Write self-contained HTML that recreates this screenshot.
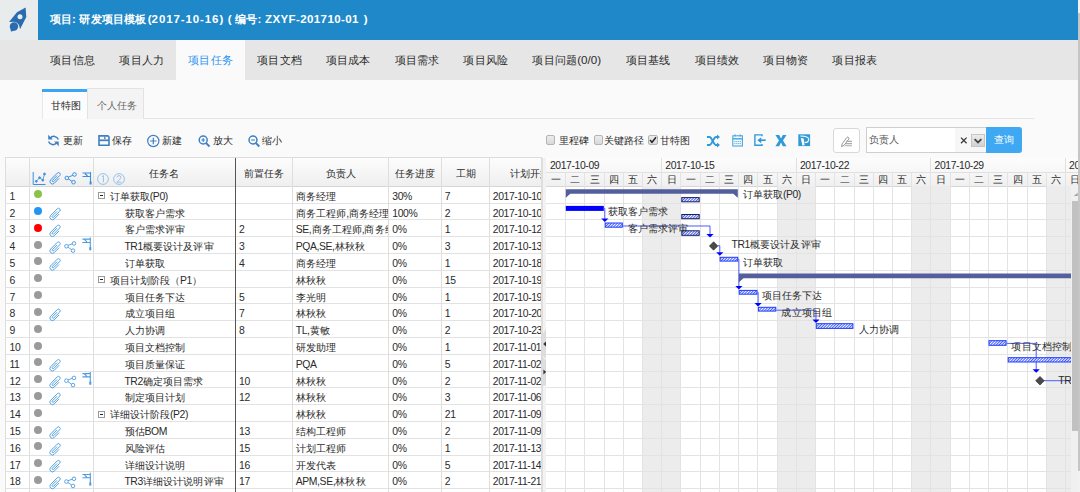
<!DOCTYPE html><html><head><meta charset="utf-8"><style>
@font-face{font-family:"Liberation Sans Wide";src:local("Liberation Sans");size-adjust:130%;ascent-override:69.6%;descent-override:16.3%;line-gap-override:0%}
*{margin:0;padding:0;box-sizing:border-box}
html,body{width:1080px;height:492px;overflow:hidden;background:#fafafa;font-family:"Liberation Sans",sans-serif;color:#333}
.ab{position:absolute}
.t{position:absolute;white-space:nowrap;line-height:1}
i{font-style:normal;display:inline-block;width:1em;text-align:center;font-size:.97em;font-family:"Liberation Sans Wide","Liberation Sans",sans-serif}
</style></head><body>
<div class="ab" style="left:0;top:0;width:38px;height:40px;background:#e9ecec"></div>
<svg class="ab" style="left:0;top:0" width="38" height="40" viewBox="0 0 38 40"><path d="M25.6 7.6 L26.3 17 L20 29.3 Q19.5 22.5 14 21.8 L9 22 L17 12.2 Z" fill="#2a6cb0"/><circle cx="20" cy="16.7" r="2.5" fill="#e9ecec"/><circle cx="14" cy="26.5" r="4.2" fill="#2a6cb0"/><path d="M10 26 L11 31.8 L15 30" fill="#2a6cb0"/></svg>
<div class="ab" style="left:38px;top:0;width:1042px;height:40px;background:#1f88c8"></div>
<div class="t" style="left:49.7px;top:14px;font-size:11.5px;font-weight:bold;color:#fff;letter-spacing:0px"><i>项</i><i>目</i>:</div>
<div class="t" style="left:79.4px;top:14px;font-size:11.5px;font-weight:bold;color:#fff;letter-spacing:0px"><i>研</i><i>发</i><i>项</i><i>目</i><i>模</i><i>板</i></div>
<div class="t" style="left:147.7px;top:14px;font-size:11.5px;font-weight:bold;color:#fff;letter-spacing:0px">(</div>
<div class="t" style="left:151.6px;top:14px;font-size:11.5px;font-weight:bold;color:#fff;letter-spacing:0.9px">2017-10-16</div>
<div class="t" style="left:219.4px;top:14px;font-size:11.5px;font-weight:bold;color:#fff;letter-spacing:0px">)</div>
<div class="t" style="left:227.7px;top:14px;font-size:11.5px;font-weight:bold;color:#fff;letter-spacing:0px">(</div>
<div class="t" style="left:235.2px;top:14px;font-size:11.5px;font-weight:bold;color:#fff;letter-spacing:0px"><i>编</i><i>号</i>:</div>
<div class="t" style="left:265.0px;top:14px;font-size:11.5px;font-weight:bold;color:#fff;letter-spacing:0.4px">ZXYF-201710-01</div>
<div class="t" style="left:363.8px;top:14px;font-size:11.5px;font-weight:bold;color:#fff;letter-spacing:0px">)</div>
<div class="ab" style="left:0;top:40px;width:1080px;height:40px;background:#e6e6e6"></div>
<div class="ab" style="left:176px;top:40px;width:69px;height:40px;background:#fafafa"></div>
<div class="t" style="left:50.0px;top:53.6px;font-size:11.6px;color:#2a2a2a"><i>项</i><i>目</i><i>信</i><i>息</i></div>
<div class="t" style="left:119.2px;top:53.6px;font-size:11.6px;color:#2a2a2a"><i>项</i><i>目</i><i>人</i><i>力</i></div>
<div class="t" style="left:187.9px;top:53.6px;font-size:11.6px;color:#2b93f2"><i>项</i><i>目</i><i>任</i><i>务</i></div>
<div class="t" style="left:256.9px;top:53.6px;font-size:11.6px;color:#2a2a2a"><i>项</i><i>目</i><i>文</i><i>档</i></div>
<div class="t" style="left:325.4px;top:53.6px;font-size:11.6px;color:#2a2a2a"><i>项</i><i>目</i><i>成</i><i>本</i></div>
<div class="t" style="left:394.4px;top:53.6px;font-size:11.6px;color:#2a2a2a"><i>项</i><i>目</i><i>需</i><i>求</i></div>
<div class="t" style="left:463.2px;top:53.6px;font-size:11.6px;color:#2a2a2a"><i>项</i><i>目</i><i>风</i><i>险</i></div>
<div class="t" style="left:532.2px;top:53.6px;font-size:11.6px;color:#2a2a2a"><i>项</i><i>目</i><i>问</i><i>题</i>(0/0)</div>
<div class="t" style="left:625.4px;top:53.6px;font-size:11.6px;color:#2a2a2a"><i>项</i><i>目</i><i>基</i><i>线</i></div>
<div class="t" style="left:694.4px;top:53.6px;font-size:11.6px;color:#2a2a2a"><i>项</i><i>目</i><i>绩</i><i>效</i></div>
<div class="t" style="left:763.2px;top:53.6px;font-size:11.6px;color:#2a2a2a"><i>项</i><i>目</i><i>物</i><i>资</i></div>
<div class="t" style="left:832.2px;top:53.6px;font-size:11.6px;color:#2a2a2a"><i>项</i><i>目</i><i>报</i><i>表</i></div>
<div class="ab" style="left:42px;top:118px;width:992px;height:1px;background:#e5e5e5"></div>
<div class="ab" style="left:42px;top:89px;width:45px;height:30px;background:#fcfcfc;border-left:1px solid #e8e8e8"></div>
<div class="ab" style="left:42px;top:89px;width:45px;height:3px;background:#3aa6f2"></div>
<div class="ab" style="left:87px;top:88px;width:57px;height:31px;background:#f4f4f4;border:1px solid #e3e3e3;border-bottom:none"></div>
<div class="t" style="left:50.6px;top:101.3px;font-size:10.4px;letter-spacing:-0.4px;color:#222"><i>甘</i><i>特</i><i>图</i></div>
<div class="t" style="left:96.5px;top:101.3px;font-size:10.4px;letter-spacing:-0.4px;color:#666"><i>个</i><i>人</i><i>任</i><i>务</i></div>
<svg class="ab" style="left:0;top:128px" width="300" height="24" viewBox="0 128 300 24">
<g fill="none" stroke="#3f7fc5" stroke-width="1.6">
<path d="M50.2 138.3 A4.6 4.6 0 0 1 58.3 139.5" stroke-width="1.5"/><path d="M48.6 141.6 A4.6 4.6 0 0 0 56.6 142.8" stroke-width="1.5"/>
<path d="M99 135.9 H107.9 L109 137 V145.2 H99 Z" stroke-width="1.6"/><path d="M99 140.3 H109" stroke-width="1.7"/><path d="M104.8 136.8 V139" stroke-width="1.3"/>
<circle cx="153.3" cy="141" r="5.6" stroke-width="1.2"/><path d="M150 141 H156.6 M153.3 137.7 V144.3" stroke-width="1.2"/>
<circle cx="203.2" cy="140" r="4" stroke-width="1.5"/><path d="M206 143 L209.5 146.5" stroke-width="1.8"/><path d="M201.3 140 H205 M203.2 138.1 V141.9" stroke-width="1.1"/>
<circle cx="253" cy="140" r="4" stroke-width="1.5"/><path d="M255.8 143 L259.3 146.5" stroke-width="1.8"/><path d="M251.1 140 H254.9" stroke-width="1.1"/>
</g>
<path d="M48.2 134.8 V139.6 H52.8 Z M58.7 146.3 V141.6 H54.2 Z" fill="#3f7fc5"/>
</svg>
<div class="t" style="left:62.5px;top:135.8px;font-size:10.4px;letter-spacing:-0.4px;color:#2a2a2a"><i>更</i><i>新</i></div>
<div class="t" style="left:112px;top:135.8px;font-size:10.4px;letter-spacing:-0.4px;color:#2a2a2a"><i>保</i><i>存</i></div>
<div class="t" style="left:162px;top:135.8px;font-size:10.4px;letter-spacing:-0.4px;color:#2a2a2a"><i>新</i><i>建</i></div>
<div class="t" style="left:212.5px;top:135.8px;font-size:10.4px;letter-spacing:-0.4px;color:#2a2a2a"><i>放</i><i>大</i></div>
<div class="t" style="left:262px;top:135.8px;font-size:10.4px;letter-spacing:-0.4px;color:#2a2a2a"><i>缩</i><i>小</i></div>
<div class="ab" style="left:545.7px;top:135.4px;width:9.3px;height:9.3px;border:1px solid #b4b4b4;border-radius:2px;background:linear-gradient(#ececec,#d9d9d9)"></div>
<div class="ab" style="left:594px;top:135.4px;width:9.3px;height:9.3px;border:1px solid #b4b4b4;border-radius:2px;background:linear-gradient(#ececec,#d9d9d9)"></div>
<div class="ab" style="left:648.4px;top:135.4px;width:9.3px;height:9.3px;border:1px solid #b4b4b4;border-radius:2px;background:linear-gradient(#ececec,#d9d9d9)"></div>
<svg class="ab" style="left:648.4px;top:135.4px" width="10" height="10"><path d="M2 5 L4 7.3 L8 2.2" fill="none" stroke="#222" stroke-width="1.4"/></svg>
<div class="t" style="left:558.7px;top:135.8px;font-size:10.4px;letter-spacing:-0.4px;color:#2a2a2a"><i>里</i><i>程</i><i>碑</i></div>
<div class="t" style="left:603.8px;top:135.8px;font-size:10.4px;letter-spacing:-0.4px;color:#2a2a2a"><i>关</i><i>键</i><i>路</i><i>径</i></div>
<div class="t" style="left:659.3px;top:135.8px;font-size:10.4px;letter-spacing:-0.4px;color:#2a2a2a"><i>甘</i><i>特</i><i>图</i></div>
<svg class="ab" style="left:700px;top:130px" width="120" height="20" viewBox="700 130 120 20">
<g fill="none" stroke="#2f9ad8" stroke-width="1.8">
<path d="M707 137 H709.5 C712 137 713.5 145 716 145 H718"/><path d="M707 145 H709.5 C712 145 713.5 137 716 137 H718"/>
</g>
<path d="M717 134.5 L720 137 L717 139.5 Z M717 142.5 L720 145 L717 147.5 Z" fill="#2f9ad8"/>
<g fill="none" stroke="#2f9ad8" stroke-width="1.1">
<g stroke="#4aa8e0"><rect x="732.8" y="135.8" width="9.6" height="10.2"/><path d="M732.8 138.8 H742.4" stroke-width="1.5"/><path d="M735 134.6 V136.6 M740.2 134.6 V136.6" stroke-width="1.3"/></g>
<path d="M734.3 141.6 H741 M734.3 143.6 H741" stroke="#6ab8e8" stroke-width="1" stroke-dasharray="1.3 0.5"/>
</g>
<g fill="none" stroke="#2f9ad8" stroke-width="1.6">
<path d="M762 136.2 V134.9 H754.9 V145.2 H762 V143.9" stroke-width="1.4"/><path d="M765.7 140.2 H760" stroke-width="1.7"/>
</g>
<path d="M757.3 140.2 L761.2 137.2 V143.2 Z" fill="#2f9ad8"/>
<path d="M775.4 135 H779.2 L781 138.6 L782.8 135 H786.5 L783 140.6 L786.5 146.3 H782.8 L781 142.6 L779.2 146.3 H775.4 L779 140.6 Z" fill="#2f9ad8"/>
<rect x="798.3" y="134.3" width="11.8" height="11.8" fill="#2f9ad8"/>
<path d="M800.3 136 Q808.6 136.2 808.7 139.2 Q808.7 142.6 804.6 142.4" fill="none" stroke="#fff" stroke-width="1.2"/><path d="M800.8 138 L803.6 138.4 L804.6 145.3 L802.3 145.5 Z" fill="#fff"/>
</svg>
<div class="ab" style="left:833.2px;top:128.2px;width:27.2px;height:25.3px;border:1px solid #d8d8d8;border-radius:3px;background:#fff"></div>
<svg class="ab" style="left:833px;top:128px" width="28" height="26"><path d="M8.6 18.6 L9.2 15.8 L13.9 9.4 A1.3 1.3 0 0 1 15.9 10.9 L11.2 17.2 Z" fill="none" stroke="#8a8a8a" stroke-width="0.9"/><path d="M13.3 13.4 H19 M12.6 15.6 H19 M11.9 17.8 H19" stroke="#aaa" stroke-width="1.1"/></svg>
<div class="ab" style="left:866.2px;top:127px;width:120px;height:25.8px;border:1px solid #cfcfcf;background:#fff"></div>
<div class="ab" style="left:955px;top:128px;width:30.5px;height:23.8px;background:#f7f7f7"></div>
<div class="t" style="left:868.5px;top:134.5px;font-size:10.4px;letter-spacing:-0.4px;color:#555"><i>负</i><i>责</i><i>人</i></div>
<svg class="ab" style="left:955px;top:130px" width="30" height="20"><path d="M6 7.6 L11.6 13.2 M11.6 7.6 L6 13.2" stroke="#3a3a3a" stroke-width="1.3"/></svg>
<div class="ab" style="left:971.2px;top:133.7px;width:13.5px;height:13.2px;border:1px solid #c4c4cc;background:linear-gradient(#ececec,#d2d2d2)"></div>
<svg class="ab" style="left:971px;top:134px" width="14" height="13"><path d="M3.6 5.2 L7 8.4 L10.4 5.2" fill="none" stroke="#444" stroke-width="1.8"/></svg>
<div class="ab" style="left:986px;top:127px;width:35.7px;height:25.8px;background:#3ea8f2;border-radius:0 3px 3px 0"></div>
<div class="t" style="left:994px;top:134.5px;font-size:10.4px;letter-spacing:-0.4px;color:#fff"><i>查</i><i>询</i></div>
<div class="ab" style="left:5px;top:157.8px;width:536.6px;height:28.4px;background:linear-gradient(#fdfdfd,#efefef)"></div>
<div class="ab" style="left:5px;top:186.2px;width:536.6px;height:305.8px;background:#fff"></div>
<div class="ab" style="left:5px;top:157.3px;width:536.6px;height:1px;background:#dcdcdc"></div>
<div class="ab" style="left:5px;top:185.7px;width:536.6px;height:1px;background:#d6d6d6"></div>
<div class="ab" style="left:5px;top:202.51px;width:536.6px;height:1px;background:#e2e2e2"></div>
<div class="ab" style="left:5px;top:219.32px;width:536.6px;height:1px;background:#e2e2e2"></div>
<div class="ab" style="left:5px;top:236.13px;width:536.6px;height:1px;background:#e2e2e2"></div>
<div class="ab" style="left:5px;top:252.94px;width:536.6px;height:1px;background:#e2e2e2"></div>
<div class="ab" style="left:5px;top:269.75px;width:536.6px;height:1px;background:#e2e2e2"></div>
<div class="ab" style="left:5px;top:286.56px;width:536.6px;height:1px;background:#e2e2e2"></div>
<div class="ab" style="left:5px;top:303.37px;width:536.6px;height:1px;background:#e2e2e2"></div>
<div class="ab" style="left:5px;top:320.18px;width:536.6px;height:1px;background:#e2e2e2"></div>
<div class="ab" style="left:5px;top:336.99px;width:536.6px;height:1px;background:#e2e2e2"></div>
<div class="ab" style="left:5px;top:353.8px;width:536.6px;height:1px;background:#e2e2e2"></div>
<div class="ab" style="left:5px;top:370.61px;width:536.6px;height:1px;background:#e2e2e2"></div>
<div class="ab" style="left:5px;top:387.42px;width:536.6px;height:1px;background:#e2e2e2"></div>
<div class="ab" style="left:5px;top:404.23px;width:536.6px;height:1px;background:#e2e2e2"></div>
<div class="ab" style="left:5px;top:421.04px;width:536.6px;height:1px;background:#e2e2e2"></div>
<div class="ab" style="left:5px;top:437.85px;width:536.6px;height:1px;background:#e2e2e2"></div>
<div class="ab" style="left:5px;top:454.66px;width:536.6px;height:1px;background:#e2e2e2"></div>
<div class="ab" style="left:5px;top:471.47px;width:536.6px;height:1px;background:#e2e2e2"></div>
<div class="ab" style="left:5px;top:488.28px;width:536.6px;height:1px;background:#e2e2e2"></div>
<div class="ab" style="left:4.5px;top:157.8px;width:1px;height:334.2px;background:#dedede"></div>
<div class="ab" style="left:29.0px;top:157.8px;width:1px;height:334.2px;background:#dedede"></div>
<div class="ab" style="left:93.0px;top:157.8px;width:1px;height:334.2px;background:#dedede"></div>
<div class="ab" style="left:235.0px;top:157.8px;width:1px;height:334.2px;background:#555"></div>
<div class="ab" style="left:292.0px;top:157.8px;width:1px;height:334.2px;background:#dedede"></div>
<div class="ab" style="left:388.2px;top:157.8px;width:1px;height:334.2px;background:#dedede"></div>
<div class="ab" style="left:440.9px;top:157.8px;width:1px;height:334.2px;background:#dedede"></div>
<div class="ab" style="left:488.9px;top:157.8px;width:1px;height:334.2px;background:#dedede"></div>
<div class="ab" style="left:541.1px;top:157.8px;width:1px;height:334.2px;background:#dedede"></div>
<div class="t" style="left:134px;width:60px;text-align:center;top:168.5px;font-size:10.4px;letter-spacing:-0.4px;color:#2a2a2a"><i>任</i><i>务</i><i>名</i></div>
<div class="t" style="left:235.5px;width:57.0px;text-align:center;top:168.5px;font-size:10.4px;letter-spacing:-0.4px;color:#2a2a2a"><i>前</i><i>置</i><i>任</i><i>务</i></div>
<div class="t" style="left:292.5px;width:96.2px;text-align:center;top:168.5px;font-size:10.4px;letter-spacing:-0.4px;color:#2a2a2a"><i>负</i><i>责</i><i>人</i></div>
<div class="t" style="left:388.7px;width:52.7px;text-align:center;top:168.5px;font-size:10.4px;letter-spacing:-0.4px;color:#2a2a2a"><i>任</i><i>务</i><i>进</i><i>度</i></div>
<div class="t" style="left:441.4px;width:48.0px;text-align:center;top:168.5px;font-size:10.4px;letter-spacing:-0.4px;color:#2a2a2a"><i>工</i><i>期</i></div>
<div style="position:absolute;left:489.4px;top:157.8px;width:52px;height:28px;overflow:hidden"><div class="t" style="left:0;width:81px;text-align:center;top:11.6px;font-size:10.4px;letter-spacing:-0.4px;color:#2a2a2a"><i>计</i><i>划</i><i>开</i><i>始</i></div></div>
<svg class="ab" style="left:0;top:160px" width="130" height="30" viewBox="0 160 130 30">
<g fill="none" stroke="#3b8fe0" stroke-width="1">
<path d="M33.2 172 V184.5 H45.5"/><path d="M36.3 181.3 L39.6 177.7 L42.8 180.2 L44.5 174" stroke-width="0.8"/>
<circle cx="36.3" cy="181.3" r="0.9" fill="#3b8fe0"/><circle cx="39.6" cy="177.7" r="0.9" fill="#3b8fe0"/><circle cx="42.8" cy="180.2" r="0.9" fill="#3b8fe0"/><circle cx="44.5" cy="174" r="0.9" fill="#3b8fe0"/>
<g transform="translate(55.5 178.5) rotate(45) scale(0.9) translate(-2.8 -8.5)"><path d="M1.8 5 V12.2 A1 1 0 0 0 3.8 12.2 V2.8 A1.9 1.9 0 0 0 0 2.8 V13.2 A2.8 2.8 0 0 0 5.6 13.2 V5.5" stroke-width="1"/></g>
<circle cx="74.5" cy="174.5" r="1.8"/><circle cx="66.8" cy="178" r="1.8"/><circle cx="73.5" cy="182.2" r="1.8"/><path d="M68.4 177.1 L72.9 175.3 M68.4 179 L71.9 181.2"/>
<path d="M90.5 172 V184" stroke-width="1.1"/><path d="M82.5 173 H90.5 M82.5 176.5 H90.5 M85 173.5 L87.5 176" stroke-width="1.1"/>
<circle cx="103" cy="179" r="5.4" stroke="#7db6ea" stroke-width="0.8"/><circle cx="119" cy="179" r="5.4" stroke="#7db6ea" stroke-width="0.8"/>
<path d="M101.9 176.6 L103.4 175.7 V182.3" stroke="#7db6ea" stroke-width="0.8"/><path d="M116.9 177.3 Q117.1 175.6 119 175.6 Q121 175.7 120.9 177.4 Q120.6 179 116.9 182.2 H121.3" stroke="#7db6ea" stroke-width="0.8"/>
</g>
<rect x="89.6" y="181.5" width="2" height="3" fill="#3b8fe0"/>
</svg>
<div class="t" style="left:9.5px;top:191.7px;font-size:10.4px;letter-spacing:-0.4px;color:#2a2a2a">1</div>
<div class="ab" style="left:33.55px;top:190.2px;width:8px;height:8px;border-radius:50%;background:#8bc34a"></div>
<div class="ab" style="left:97.8px;top:192px;width:7.2px;height:7.2px;border:1px solid #9a9a9a;background:#fff"></div>
<div class="ab" style="left:99.6px;top:195.1px;width:3.6px;height:1.2px;background:#222"></div>
<div class="t" style="left:109.5px;top:191.7px;font-size:10.4px;letter-spacing:-0.4px;color:#2a2a2a"><i>订</i><i>单</i><i>获</i><i>取</i>(P0)</div>
<div class="t" style="left:239px;top:191.7px;font-size:10.4px;letter-spacing:-0.4px;color:#2a2a2a"></div>
<div style="position:absolute;left:293px;top:186.2px;width:95px;height:16.81px;overflow:hidden"><div class="t" style="left:2.8px;top:5.5px;font-size:10.4px;letter-spacing:-0.4px;color:#2a2a2a"><i>商</i><i>务</i><i>经</i><i>理</i></div></div>
<div class="t" style="left:392.3px;top:191.7px;font-size:10.4px;letter-spacing:-0.4px;color:#2a2a2a">30%</div>
<div class="t" style="left:444.8px;top:191.7px;font-size:10.4px;letter-spacing:-0.4px;color:#2a2a2a">7</div>
<div style="position:absolute;left:490px;top:186.2px;width:51px;height:16.81px;overflow:hidden"><div class="t" style="left:2.8px;top:5.5px;font-size:10.4px;letter-spacing:-0.4px;color:#2a2a2a">2017-10-10</div></div>
<div class="t" style="left:9.5px;top:208.51px;font-size:10.4px;letter-spacing:-0.4px;color:#2a2a2a">2</div>
<div class="ab" style="left:33.55px;top:207.01px;width:8px;height:8px;border-radius:50%;background:#2196f3"></div>
<div class="t" style="left:124.4px;top:208.51px;font-size:10.4px;letter-spacing:-0.4px;color:#2a2a2a"><i>获</i><i>取</i><i>客</i><i>户</i><i>需</i><i>求</i></div>
<div class="t" style="left:239px;top:208.51px;font-size:10.4px;letter-spacing:-0.4px;color:#2a2a2a"></div>
<div style="position:absolute;left:293px;top:203.01px;width:95px;height:16.81px;overflow:hidden"><div class="t" style="left:2.8px;top:5.5px;font-size:10.4px;letter-spacing:-0.4px;color:#2a2a2a"><i>商</i><i>务</i><i>工</i><i>程</i><i>师</i>,<i>商</i><i>务</i><i>经</i><i>理</i></div></div>
<div class="t" style="left:392.3px;top:208.51px;font-size:10.4px;letter-spacing:-0.4px;color:#2a2a2a">100%</div>
<div class="t" style="left:444.8px;top:208.51px;font-size:10.4px;letter-spacing:-0.4px;color:#2a2a2a">2</div>
<div style="position:absolute;left:490px;top:203.01px;width:51px;height:16.81px;overflow:hidden"><div class="t" style="left:2.8px;top:5.5px;font-size:10.4px;letter-spacing:-0.4px;color:#2a2a2a">2017-10-10</div></div>
<div class="t" style="left:9.5px;top:225.32px;font-size:10.4px;letter-spacing:-0.4px;color:#2a2a2a">3</div>
<div class="ab" style="left:33.55px;top:223.82px;width:8px;height:8px;border-radius:50%;background:#ff0000"></div>
<div class="t" style="left:124.4px;top:225.32px;font-size:10.4px;letter-spacing:-0.4px;color:#2a2a2a"><i>客</i><i>户</i><i>需</i><i>求</i><i>评</i><i>审</i></div>
<div class="t" style="left:239px;top:225.32px;font-size:10.4px;letter-spacing:-0.4px;color:#2a2a2a">2</div>
<div style="position:absolute;left:293px;top:219.82px;width:95px;height:16.81px;overflow:hidden"><div class="t" style="left:2.8px;top:5.5px;font-size:10.4px;letter-spacing:-0.4px;color:#2a2a2a">SE,<i>商</i><i>务</i><i>工</i><i>程</i><i>师</i>,<i>商</i><i>务</i><i>经</i><i>理</i></div></div>
<div class="t" style="left:392.3px;top:225.32px;font-size:10.4px;letter-spacing:-0.4px;color:#2a2a2a">0%</div>
<div class="t" style="left:444.8px;top:225.32px;font-size:10.4px;letter-spacing:-0.4px;color:#2a2a2a">1</div>
<div style="position:absolute;left:490px;top:219.82px;width:51px;height:16.81px;overflow:hidden"><div class="t" style="left:2.8px;top:5.5px;font-size:10.4px;letter-spacing:-0.4px;color:#2a2a2a">2017-10-12</div></div>
<div class="t" style="left:9.5px;top:242.13px;font-size:10.4px;letter-spacing:-0.4px;color:#2a2a2a">4</div>
<div class="ab" style="left:33.55px;top:240.63px;width:8px;height:8px;border-radius:50%;background:#9a9a9a"></div>
<div class="t" style="left:124.4px;top:242.13px;font-size:10.4px;letter-spacing:-0.4px;color:#2a2a2a">TR1<i>概</i><i>要</i><i>设</i><i>计</i><i>及</i><i>评</i><i>审</i></div>
<div class="t" style="left:239px;top:242.13px;font-size:10.4px;letter-spacing:-0.4px;color:#2a2a2a">3</div>
<div style="position:absolute;left:293px;top:236.63px;width:95px;height:16.81px;overflow:hidden"><div class="t" style="left:2.8px;top:5.5px;font-size:10.4px;letter-spacing:-0.4px;color:#2a2a2a">PQA,SE,<i>林</i><i>秋</i><i>秋</i></div></div>
<div class="t" style="left:392.3px;top:242.13px;font-size:10.4px;letter-spacing:-0.4px;color:#2a2a2a">0%</div>
<div class="t" style="left:444.8px;top:242.13px;font-size:10.4px;letter-spacing:-0.4px;color:#2a2a2a">3</div>
<div style="position:absolute;left:490px;top:236.63px;width:51px;height:16.81px;overflow:hidden"><div class="t" style="left:2.8px;top:5.5px;font-size:10.4px;letter-spacing:-0.4px;color:#2a2a2a">2017-10-13</div></div>
<div class="t" style="left:9.5px;top:258.94px;font-size:10.4px;letter-spacing:-0.4px;color:#2a2a2a">5</div>
<div class="ab" style="left:33.55px;top:257.44px;width:8px;height:8px;border-radius:50%;background:#9a9a9a"></div>
<div class="t" style="left:124.4px;top:258.94px;font-size:10.4px;letter-spacing:-0.4px;color:#2a2a2a"><i>订</i><i>单</i><i>获</i><i>取</i></div>
<div class="t" style="left:239px;top:258.94px;font-size:10.4px;letter-spacing:-0.4px;color:#2a2a2a">4</div>
<div style="position:absolute;left:293px;top:253.44px;width:95px;height:16.81px;overflow:hidden"><div class="t" style="left:2.8px;top:5.5px;font-size:10.4px;letter-spacing:-0.4px;color:#2a2a2a"><i>商</i><i>务</i><i>经</i><i>理</i></div></div>
<div class="t" style="left:392.3px;top:258.94px;font-size:10.4px;letter-spacing:-0.4px;color:#2a2a2a">0%</div>
<div class="t" style="left:444.8px;top:258.94px;font-size:10.4px;letter-spacing:-0.4px;color:#2a2a2a">1</div>
<div style="position:absolute;left:490px;top:253.44px;width:51px;height:16.81px;overflow:hidden"><div class="t" style="left:2.8px;top:5.5px;font-size:10.4px;letter-spacing:-0.4px;color:#2a2a2a">2017-10-18</div></div>
<div class="t" style="left:9.5px;top:275.75px;font-size:10.4px;letter-spacing:-0.4px;color:#2a2a2a">6</div>
<div class="ab" style="left:33.55px;top:274.25px;width:8px;height:8px;border-radius:50%;background:#9a9a9a"></div>
<div class="ab" style="left:97.8px;top:276.05px;width:7.2px;height:7.2px;border:1px solid #9a9a9a;background:#fff"></div>
<div class="ab" style="left:99.6px;top:279.15px;width:3.6px;height:1.2px;background:#222"></div>
<div class="t" style="left:109.5px;top:275.75px;font-size:10.4px;letter-spacing:-0.4px;color:#2a2a2a"><i>项</i><i>目</i><i>计</i><i>划</i><i>阶</i><i>段</i><i>（</i>P1<i>）</i></div>
<div class="t" style="left:239px;top:275.75px;font-size:10.4px;letter-spacing:-0.4px;color:#2a2a2a"></div>
<div style="position:absolute;left:293px;top:270.25px;width:95px;height:16.81px;overflow:hidden"><div class="t" style="left:2.8px;top:5.5px;font-size:10.4px;letter-spacing:-0.4px;color:#2a2a2a"><i>林</i><i>秋</i><i>秋</i></div></div>
<div class="t" style="left:392.3px;top:275.75px;font-size:10.4px;letter-spacing:-0.4px;color:#2a2a2a">0%</div>
<div class="t" style="left:444.8px;top:275.75px;font-size:10.4px;letter-spacing:-0.4px;color:#2a2a2a">15</div>
<div style="position:absolute;left:490px;top:270.25px;width:51px;height:16.81px;overflow:hidden"><div class="t" style="left:2.8px;top:5.5px;font-size:10.4px;letter-spacing:-0.4px;color:#2a2a2a">2017-10-19</div></div>
<div class="t" style="left:9.5px;top:292.56px;font-size:10.4px;letter-spacing:-0.4px;color:#2a2a2a">7</div>
<div class="ab" style="left:33.55px;top:291.06px;width:8px;height:8px;border-radius:50%;background:#9a9a9a"></div>
<div class="t" style="left:124.4px;top:292.56px;font-size:10.4px;letter-spacing:-0.4px;color:#2a2a2a"><i>项</i><i>目</i><i>任</i><i>务</i><i>下</i><i>达</i></div>
<div class="t" style="left:239px;top:292.56px;font-size:10.4px;letter-spacing:-0.4px;color:#2a2a2a">5</div>
<div style="position:absolute;left:293px;top:287.06px;width:95px;height:16.81px;overflow:hidden"><div class="t" style="left:2.8px;top:5.5px;font-size:10.4px;letter-spacing:-0.4px;color:#2a2a2a"><i>李</i><i>光</i><i>明</i></div></div>
<div class="t" style="left:392.3px;top:292.56px;font-size:10.4px;letter-spacing:-0.4px;color:#2a2a2a">0%</div>
<div class="t" style="left:444.8px;top:292.56px;font-size:10.4px;letter-spacing:-0.4px;color:#2a2a2a">1</div>
<div style="position:absolute;left:490px;top:287.06px;width:51px;height:16.81px;overflow:hidden"><div class="t" style="left:2.8px;top:5.5px;font-size:10.4px;letter-spacing:-0.4px;color:#2a2a2a">2017-10-19</div></div>
<div class="t" style="left:9.5px;top:309.38px;font-size:10.4px;letter-spacing:-0.4px;color:#2a2a2a">8</div>
<div class="ab" style="left:33.55px;top:307.88px;width:8px;height:8px;border-radius:50%;background:#9a9a9a"></div>
<div class="t" style="left:124.4px;top:309.38px;font-size:10.4px;letter-spacing:-0.4px;color:#2a2a2a"><i>成</i><i>立</i><i>项</i><i>目</i><i>组</i></div>
<div class="t" style="left:239px;top:309.38px;font-size:10.4px;letter-spacing:-0.4px;color:#2a2a2a">7</div>
<div style="position:absolute;left:293px;top:303.87px;width:95px;height:16.81px;overflow:hidden"><div class="t" style="left:2.8px;top:5.5px;font-size:10.4px;letter-spacing:-0.4px;color:#2a2a2a"><i>林</i><i>秋</i><i>秋</i></div></div>
<div class="t" style="left:392.3px;top:309.38px;font-size:10.4px;letter-spacing:-0.4px;color:#2a2a2a">0%</div>
<div class="t" style="left:444.8px;top:309.38px;font-size:10.4px;letter-spacing:-0.4px;color:#2a2a2a">1</div>
<div style="position:absolute;left:490px;top:303.87px;width:51px;height:16.81px;overflow:hidden"><div class="t" style="left:2.8px;top:5.5px;font-size:10.4px;letter-spacing:-0.4px;color:#2a2a2a">2017-10-20</div></div>
<div class="t" style="left:9.5px;top:326.18px;font-size:10.4px;letter-spacing:-0.4px;color:#2a2a2a">9</div>
<div class="ab" style="left:33.55px;top:324.68px;width:8px;height:8px;border-radius:50%;background:#9a9a9a"></div>
<div class="t" style="left:124.4px;top:326.18px;font-size:10.4px;letter-spacing:-0.4px;color:#2a2a2a"><i>人</i><i>力</i><i>协</i><i>调</i></div>
<div class="t" style="left:239px;top:326.18px;font-size:10.4px;letter-spacing:-0.4px;color:#2a2a2a">8</div>
<div style="position:absolute;left:293px;top:320.68px;width:95px;height:16.81px;overflow:hidden"><div class="t" style="left:2.8px;top:5.5px;font-size:10.4px;letter-spacing:-0.4px;color:#2a2a2a">TL,<i>黄</i><i>敏</i></div></div>
<div class="t" style="left:392.3px;top:326.18px;font-size:10.4px;letter-spacing:-0.4px;color:#2a2a2a">0%</div>
<div class="t" style="left:444.8px;top:326.18px;font-size:10.4px;letter-spacing:-0.4px;color:#2a2a2a">2</div>
<div style="position:absolute;left:490px;top:320.68px;width:51px;height:16.81px;overflow:hidden"><div class="t" style="left:2.8px;top:5.5px;font-size:10.4px;letter-spacing:-0.4px;color:#2a2a2a">2017-10-23</div></div>
<div class="t" style="left:9.5px;top:343px;font-size:10.4px;letter-spacing:-0.4px;color:#2a2a2a">10</div>
<div class="ab" style="left:33.55px;top:341.5px;width:8px;height:8px;border-radius:50%;background:#9a9a9a"></div>
<div class="t" style="left:124.4px;top:343px;font-size:10.4px;letter-spacing:-0.4px;color:#2a2a2a"><i>项</i><i>目</i><i>文</i><i>档</i><i>控</i><i>制</i></div>
<div class="t" style="left:239px;top:343px;font-size:10.4px;letter-spacing:-0.4px;color:#2a2a2a"></div>
<div style="position:absolute;left:293px;top:337.49px;width:95px;height:16.81px;overflow:hidden"><div class="t" style="left:2.8px;top:5.5px;font-size:10.4px;letter-spacing:-0.4px;color:#2a2a2a"><i>研</i><i>发</i><i>助</i><i>理</i></div></div>
<div class="t" style="left:392.3px;top:343px;font-size:10.4px;letter-spacing:-0.4px;color:#2a2a2a">0%</div>
<div class="t" style="left:444.8px;top:343px;font-size:10.4px;letter-spacing:-0.4px;color:#2a2a2a">1</div>
<div style="position:absolute;left:490px;top:337.49px;width:51px;height:16.81px;overflow:hidden"><div class="t" style="left:2.8px;top:5.5px;font-size:10.4px;letter-spacing:-0.4px;color:#2a2a2a">2017-11-01</div></div>
<div class="t" style="left:9.5px;top:359.8px;font-size:10.4px;letter-spacing:-0.4px;color:#2a2a2a">11</div>
<div class="ab" style="left:33.55px;top:358.3px;width:8px;height:8px;border-radius:50%;background:#9a9a9a"></div>
<div class="t" style="left:124.4px;top:359.8px;font-size:10.4px;letter-spacing:-0.4px;color:#2a2a2a"><i>项</i><i>目</i><i>质</i><i>量</i><i>保</i><i>证</i></div>
<div class="t" style="left:239px;top:359.8px;font-size:10.4px;letter-spacing:-0.4px;color:#2a2a2a"></div>
<div style="position:absolute;left:293px;top:354.3px;width:95px;height:16.81px;overflow:hidden"><div class="t" style="left:2.8px;top:5.5px;font-size:10.4px;letter-spacing:-0.4px;color:#2a2a2a">PQA</div></div>
<div class="t" style="left:392.3px;top:359.8px;font-size:10.4px;letter-spacing:-0.4px;color:#2a2a2a">0%</div>
<div class="t" style="left:444.8px;top:359.8px;font-size:10.4px;letter-spacing:-0.4px;color:#2a2a2a">5</div>
<div style="position:absolute;left:490px;top:354.3px;width:51px;height:16.81px;overflow:hidden"><div class="t" style="left:2.8px;top:5.5px;font-size:10.4px;letter-spacing:-0.4px;color:#2a2a2a">2017-11-02</div></div>
<div class="t" style="left:9.5px;top:376.62px;font-size:10.4px;letter-spacing:-0.4px;color:#2a2a2a">12</div>
<div class="ab" style="left:33.55px;top:375.12px;width:8px;height:8px;border-radius:50%;background:#9a9a9a"></div>
<div class="t" style="left:124.4px;top:376.62px;font-size:10.4px;letter-spacing:-0.4px;color:#2a2a2a">TR2<i>确</i><i>定</i><i>项</i><i>目</i><i>需</i><i>求</i></div>
<div class="t" style="left:239px;top:376.62px;font-size:10.4px;letter-spacing:-0.4px;color:#2a2a2a">10</div>
<div style="position:absolute;left:293px;top:371.11px;width:95px;height:16.81px;overflow:hidden"><div class="t" style="left:2.8px;top:5.5px;font-size:10.4px;letter-spacing:-0.4px;color:#2a2a2a"><i>林</i><i>秋</i><i>秋</i></div></div>
<div class="t" style="left:392.3px;top:376.62px;font-size:10.4px;letter-spacing:-0.4px;color:#2a2a2a">0%</div>
<div class="t" style="left:444.8px;top:376.62px;font-size:10.4px;letter-spacing:-0.4px;color:#2a2a2a">2</div>
<div style="position:absolute;left:490px;top:371.11px;width:51px;height:16.81px;overflow:hidden"><div class="t" style="left:2.8px;top:5.5px;font-size:10.4px;letter-spacing:-0.4px;color:#2a2a2a">2017-11-02</div></div>
<div class="t" style="left:9.5px;top:393.42px;font-size:10.4px;letter-spacing:-0.4px;color:#2a2a2a">13</div>
<div class="ab" style="left:33.55px;top:391.92px;width:8px;height:8px;border-radius:50%;background:#9a9a9a"></div>
<div class="t" style="left:124.4px;top:393.42px;font-size:10.4px;letter-spacing:-0.4px;color:#2a2a2a"><i>制</i><i>定</i><i>项</i><i>目</i><i>计</i><i>划</i></div>
<div class="t" style="left:239px;top:393.42px;font-size:10.4px;letter-spacing:-0.4px;color:#2a2a2a">12</div>
<div style="position:absolute;left:293px;top:387.92px;width:95px;height:16.81px;overflow:hidden"><div class="t" style="left:2.8px;top:5.5px;font-size:10.4px;letter-spacing:-0.4px;color:#2a2a2a"><i>林</i><i>秋</i><i>秋</i></div></div>
<div class="t" style="left:392.3px;top:393.42px;font-size:10.4px;letter-spacing:-0.4px;color:#2a2a2a">0%</div>
<div class="t" style="left:444.8px;top:393.42px;font-size:10.4px;letter-spacing:-0.4px;color:#2a2a2a">3</div>
<div style="position:absolute;left:490px;top:387.92px;width:51px;height:16.81px;overflow:hidden"><div class="t" style="left:2.8px;top:5.5px;font-size:10.4px;letter-spacing:-0.4px;color:#2a2a2a">2017-11-06</div></div>
<div class="t" style="left:9.5px;top:410.23px;font-size:10.4px;letter-spacing:-0.4px;color:#2a2a2a">14</div>
<div class="ab" style="left:33.55px;top:408.73px;width:8px;height:8px;border-radius:50%;background:#9a9a9a"></div>
<div class="ab" style="left:97.8px;top:410.53px;width:7.2px;height:7.2px;border:1px solid #9a9a9a;background:#fff"></div>
<div class="ab" style="left:99.6px;top:413.63px;width:3.6px;height:1.2px;background:#222"></div>
<div class="t" style="left:109.5px;top:410.23px;font-size:10.4px;letter-spacing:-0.4px;color:#2a2a2a"><i>详</i><i>细</i><i>设</i><i>计</i><i>阶</i><i>段</i>(P2)</div>
<div class="t" style="left:239px;top:410.23px;font-size:10.4px;letter-spacing:-0.4px;color:#2a2a2a"></div>
<div style="position:absolute;left:293px;top:404.73px;width:95px;height:16.81px;overflow:hidden"><div class="t" style="left:2.8px;top:5.5px;font-size:10.4px;letter-spacing:-0.4px;color:#2a2a2a"><i>林</i><i>秋</i><i>秋</i></div></div>
<div class="t" style="left:392.3px;top:410.23px;font-size:10.4px;letter-spacing:-0.4px;color:#2a2a2a">0%</div>
<div class="t" style="left:444.8px;top:410.23px;font-size:10.4px;letter-spacing:-0.4px;color:#2a2a2a">21</div>
<div style="position:absolute;left:490px;top:404.73px;width:51px;height:16.81px;overflow:hidden"><div class="t" style="left:2.8px;top:5.5px;font-size:10.4px;letter-spacing:-0.4px;color:#2a2a2a">2017-11-09</div></div>
<div class="t" style="left:9.5px;top:427.04px;font-size:10.4px;letter-spacing:-0.4px;color:#2a2a2a">15</div>
<div class="ab" style="left:33.55px;top:425.54px;width:8px;height:8px;border-radius:50%;background:#9a9a9a"></div>
<div class="t" style="left:124.4px;top:427.04px;font-size:10.4px;letter-spacing:-0.4px;color:#2a2a2a"><i>预</i><i>估</i>BOM</div>
<div class="t" style="left:239px;top:427.04px;font-size:10.4px;letter-spacing:-0.4px;color:#2a2a2a">13</div>
<div style="position:absolute;left:293px;top:421.54px;width:95px;height:16.81px;overflow:hidden"><div class="t" style="left:2.8px;top:5.5px;font-size:10.4px;letter-spacing:-0.4px;color:#2a2a2a"><i>结</i><i>构</i><i>工</i><i>程</i><i>师</i></div></div>
<div class="t" style="left:392.3px;top:427.04px;font-size:10.4px;letter-spacing:-0.4px;color:#2a2a2a">0%</div>
<div class="t" style="left:444.8px;top:427.04px;font-size:10.4px;letter-spacing:-0.4px;color:#2a2a2a">2</div>
<div style="position:absolute;left:490px;top:421.54px;width:51px;height:16.81px;overflow:hidden"><div class="t" style="left:2.8px;top:5.5px;font-size:10.4px;letter-spacing:-0.4px;color:#2a2a2a">2017-11-09</div></div>
<div class="t" style="left:9.5px;top:443.85px;font-size:10.4px;letter-spacing:-0.4px;color:#2a2a2a">16</div>
<div class="ab" style="left:33.55px;top:442.35px;width:8px;height:8px;border-radius:50%;background:#9a9a9a"></div>
<div class="t" style="left:124.4px;top:443.85px;font-size:10.4px;letter-spacing:-0.4px;color:#2a2a2a"><i>风</i><i>险</i><i>评</i><i>估</i></div>
<div class="t" style="left:239px;top:443.85px;font-size:10.4px;letter-spacing:-0.4px;color:#2a2a2a">15</div>
<div style="position:absolute;left:293px;top:438.35px;width:95px;height:16.81px;overflow:hidden"><div class="t" style="left:2.8px;top:5.5px;font-size:10.4px;letter-spacing:-0.4px;color:#2a2a2a"><i>计</i><i>划</i><i>工</i><i>程</i><i>师</i></div></div>
<div class="t" style="left:392.3px;top:443.85px;font-size:10.4px;letter-spacing:-0.4px;color:#2a2a2a">0%</div>
<div class="t" style="left:444.8px;top:443.85px;font-size:10.4px;letter-spacing:-0.4px;color:#2a2a2a">1</div>
<div style="position:absolute;left:490px;top:438.35px;width:51px;height:16.81px;overflow:hidden"><div class="t" style="left:2.8px;top:5.5px;font-size:10.4px;letter-spacing:-0.4px;color:#2a2a2a">2017-11-13</div></div>
<div class="t" style="left:9.5px;top:460.66px;font-size:10.4px;letter-spacing:-0.4px;color:#2a2a2a">17</div>
<div class="ab" style="left:33.55px;top:459.16px;width:8px;height:8px;border-radius:50%;background:#9a9a9a"></div>
<div class="t" style="left:124.4px;top:460.66px;font-size:10.4px;letter-spacing:-0.4px;color:#2a2a2a"><i>详</i><i>细</i><i>设</i><i>计</i><i>说</i><i>明</i></div>
<div class="t" style="left:239px;top:460.66px;font-size:10.4px;letter-spacing:-0.4px;color:#2a2a2a">16</div>
<div style="position:absolute;left:293px;top:455.16px;width:95px;height:16.81px;overflow:hidden"><div class="t" style="left:2.8px;top:5.5px;font-size:10.4px;letter-spacing:-0.4px;color:#2a2a2a"><i>开</i><i>发</i><i>代</i><i>表</i></div></div>
<div class="t" style="left:392.3px;top:460.66px;font-size:10.4px;letter-spacing:-0.4px;color:#2a2a2a">0%</div>
<div class="t" style="left:444.8px;top:460.66px;font-size:10.4px;letter-spacing:-0.4px;color:#2a2a2a">5</div>
<div style="position:absolute;left:490px;top:455.16px;width:51px;height:16.81px;overflow:hidden"><div class="t" style="left:2.8px;top:5.5px;font-size:10.4px;letter-spacing:-0.4px;color:#2a2a2a">2017-11-14</div></div>
<div class="t" style="left:9.5px;top:477.47px;font-size:10.4px;letter-spacing:-0.4px;color:#2a2a2a">18</div>
<div class="ab" style="left:33.55px;top:475.97px;width:8px;height:8px;border-radius:50%;background:#9a9a9a"></div>
<div class="t" style="left:124.4px;top:477.47px;font-size:10.4px;letter-spacing:-0.4px;color:#2a2a2a">TR3<i>详</i><i>细</i><i>设</i><i>计</i><i>说</i><i>明</i><i>评</i><i>审</i></div>
<div class="t" style="left:239px;top:477.47px;font-size:10.4px;letter-spacing:-0.4px;color:#2a2a2a">17</div>
<div style="position:absolute;left:293px;top:471.97px;width:95px;height:16.81px;overflow:hidden"><div class="t" style="left:2.8px;top:5.5px;font-size:10.4px;letter-spacing:-0.4px;color:#2a2a2a">APM,SE,<i>林</i><i>秋</i><i>秋</i></div></div>
<div class="t" style="left:392.3px;top:477.47px;font-size:10.4px;letter-spacing:-0.4px;color:#2a2a2a">0%</div>
<div class="t" style="left:444.8px;top:477.47px;font-size:10.4px;letter-spacing:-0.4px;color:#2a2a2a">2</div>
<div style="position:absolute;left:490px;top:471.97px;width:51px;height:16.81px;overflow:hidden"><div class="t" style="left:2.8px;top:5.5px;font-size:10.4px;letter-spacing:-0.4px;color:#2a2a2a">2017-11-21</div></div>
<svg class="ab" style="left:0;top:0" width="100" height="492"><g fill="none" stroke="#4d9de0" stroke-width="0.9"><g transform="translate(55.4 214.21) rotate(45) scale(0.9) translate(-2.8 -8.5)"><path d="M1.8 5 V12.2 A1 1 0 0 0 3.8 12.2 V2.8 A1.9 1.9 0 0 0 0 2.8 V13.2 A2.8 2.8 0 0 0 5.6 13.2 V5.5" stroke-width="1"/></g><g transform="translate(55.4 231.02) rotate(45) scale(0.9) translate(-2.8 -8.5)"><path d="M1.8 5 V12.2 A1 1 0 0 0 3.8 12.2 V2.8 A1.9 1.9 0 0 0 0 2.8 V13.2 A2.8 2.8 0 0 0 5.6 13.2 V5.5" stroke-width="1"/></g><g transform="translate(55.4 247.83) rotate(45) scale(0.9) translate(-2.8 -8.5)"><path d="M1.8 5 V12.2 A1 1 0 0 0 3.8 12.2 V2.8 A1.9 1.9 0 0 0 0 2.8 V13.2 A2.8 2.8 0 0 0 5.6 13.2 V5.5" stroke-width="1"/></g><circle cx="74" cy="243.43" r="1.8"/><circle cx="66.4" cy="246.23" r="1.8"/><circle cx="73" cy="250.63" r="1.8"/><path d="M68 8.7 L72.4 7.2" transform="translate(0 236.63)"/><path d="M68 10.6 L71.5 13" transform="translate(0 236.63)"/><g transform="translate(0 236.63)"><path d="M90.3 0.8 V13.5" stroke-width="1.1"/><path d="M82.4 2.5 H90.3 M82.4 5.8 H90.3 M84.5 2.8 L87 5.5" stroke-width="1.1"/><rect x="89.3" y="10.5" width="2" height="3" fill="#4d9de0" stroke="none"/></g><g transform="translate(55.4 264.64) rotate(45) scale(0.9) translate(-2.8 -8.5)"><path d="M1.8 5 V12.2 A1 1 0 0 0 3.8 12.2 V2.8 A1.9 1.9 0 0 0 0 2.8 V13.2 A2.8 2.8 0 0 0 5.6 13.2 V5.5" stroke-width="1"/></g><g transform="translate(55.4 315.07) rotate(45) scale(0.9) translate(-2.8 -8.5)"><path d="M1.8 5 V12.2 A1 1 0 0 0 3.8 12.2 V2.8 A1.9 1.9 0 0 0 0 2.8 V13.2 A2.8 2.8 0 0 0 5.6 13.2 V5.5" stroke-width="1"/></g><g transform="translate(55.4 365.5) rotate(45) scale(0.9) translate(-2.8 -8.5)"><path d="M1.8 5 V12.2 A1 1 0 0 0 3.8 12.2 V2.8 A1.9 1.9 0 0 0 0 2.8 V13.2 A2.8 2.8 0 0 0 5.6 13.2 V5.5" stroke-width="1"/></g><g transform="translate(55.4 382.31) rotate(45) scale(0.9) translate(-2.8 -8.5)"><path d="M1.8 5 V12.2 A1 1 0 0 0 3.8 12.2 V2.8 A1.9 1.9 0 0 0 0 2.8 V13.2 A2.8 2.8 0 0 0 5.6 13.2 V5.5" stroke-width="1"/></g><circle cx="74" cy="377.91" r="1.8"/><circle cx="66.4" cy="380.71" r="1.8"/><circle cx="73" cy="385.11" r="1.8"/><path d="M68 8.7 L72.4 7.2" transform="translate(0 371.11)"/><path d="M68 10.6 L71.5 13" transform="translate(0 371.11)"/><g transform="translate(0 371.11)"><path d="M90.3 0.8 V13.5" stroke-width="1.1"/><path d="M82.4 2.5 H90.3 M82.4 5.8 H90.3 M84.5 2.8 L87 5.5" stroke-width="1.1"/><rect x="89.3" y="10.5" width="2" height="3" fill="#4d9de0" stroke="none"/></g><g transform="translate(55.4 399.12) rotate(45) scale(0.9) translate(-2.8 -8.5)"><path d="M1.8 5 V12.2 A1 1 0 0 0 3.8 12.2 V2.8 A1.9 1.9 0 0 0 0 2.8 V13.2 A2.8 2.8 0 0 0 5.6 13.2 V5.5" stroke-width="1"/></g><g transform="translate(55.4 432.74) rotate(45) scale(0.9) translate(-2.8 -8.5)"><path d="M1.8 5 V12.2 A1 1 0 0 0 3.8 12.2 V2.8 A1.9 1.9 0 0 0 0 2.8 V13.2 A2.8 2.8 0 0 0 5.6 13.2 V5.5" stroke-width="1"/></g><g transform="translate(55.4 449.55) rotate(45) scale(0.9) translate(-2.8 -8.5)"><path d="M1.8 5 V12.2 A1 1 0 0 0 3.8 12.2 V2.8 A1.9 1.9 0 0 0 0 2.8 V13.2 A2.8 2.8 0 0 0 5.6 13.2 V5.5" stroke-width="1"/></g><g transform="translate(55.4 466.36) rotate(45) scale(0.9) translate(-2.8 -8.5)"><path d="M1.8 5 V12.2 A1 1 0 0 0 3.8 12.2 V2.8 A1.9 1.9 0 0 0 0 2.8 V13.2 A2.8 2.8 0 0 0 5.6 13.2 V5.5" stroke-width="1"/></g><g transform="translate(55.4 483.17) rotate(45) scale(0.9) translate(-2.8 -8.5)"><path d="M1.8 5 V12.2 A1 1 0 0 0 3.8 12.2 V2.8 A1.9 1.9 0 0 0 0 2.8 V13.2 A2.8 2.8 0 0 0 5.6 13.2 V5.5" stroke-width="1"/></g><circle cx="74" cy="478.77" r="1.8"/><circle cx="66.4" cy="481.57" r="1.8"/><circle cx="73" cy="485.97" r="1.8"/><path d="M68 8.7 L72.4 7.2" transform="translate(0 471.97)"/><path d="M68 10.6 L71.5 13" transform="translate(0 471.97)"/><g transform="translate(0 471.97)"><path d="M90.3 0.8 V13.5" stroke-width="1.1"/><path d="M82.4 2.5 H90.3 M82.4 5.8 H90.3 M84.5 2.8 L87 5.5" stroke-width="1.1"/><rect x="89.3" y="10.5" width="2" height="3" fill="#4d9de0" stroke="none"/></g></g></svg>
<div class="ab" style="left:541.6px;top:157.8px;width:5px;height:334.2px;background:#f2f2f2;border-left:1px solid #dedede;border-right:1px solid #e6e6e6"></div>
<svg class="ab" style="left:0;top:0" width="560" height="400" viewBox="0 0 560 400"><path d="M541.4 336.8 L546.1 330 V358 L541.4 354 Z M541.4 356.5 L546.1 360.8 V385 L541.4 385 Z" fill="#dedede" stroke="#cfcfcf" stroke-width="0.5"/><path d="M543.2 344 L546 341.6 V346.4 Z" fill="#333"/><path d="M546.2 372 L543.4 369.6 V374.4 Z" fill="#333"/></svg>
<div style="position:absolute;left:546.4px;top:157.8px;width:531.3px;height:334.2px;overflow:hidden;background:#fff">
<div class="ab" style="left:0;top:0;width:531.3px;height:28.4px;background:linear-gradient(#fdfdfd,#f0f0f0)"></div>
<div class="ab" style="left:0;top:13.9px;width:531.3px;height:1px;background:#e0e0e0"></div>
<div class="ab" style="left:0;top:27.9px;width:531.3px;height:1px;background:#d6d6d6"></div>
<div class="ab" style="left:96.13px;top:28.4px;width:19.23px;height:305.8px;background:#ececec"></div>
<div class="ab" style="left:115.36px;top:28.4px;width:19.23px;height:305.8px;background:#ececec"></div>
<div class="ab" style="left:230.71px;top:28.4px;width:19.23px;height:305.8px;background:#ececec"></div>
<div class="ab" style="left:249.94px;top:28.4px;width:19.23px;height:305.8px;background:#ececec"></div>
<div class="ab" style="left:365.29px;top:28.4px;width:19.23px;height:305.8px;background:#ececec"></div>
<div class="ab" style="left:384.52px;top:28.4px;width:19.23px;height:305.8px;background:#ececec"></div>
<div class="ab" style="left:499.88px;top:28.4px;width:19.23px;height:305.8px;background:#ececec"></div>
<div class="ab" style="left:519.1px;top:28.4px;width:19.23px;height:305.8px;background:#ececec"></div>
<div class="ab" style="left:0;top:44.71px;width:531.3px;height:1px;background:#e3e3e3"></div>
<div class="ab" style="left:0;top:61.52px;width:531.3px;height:1px;background:#e3e3e3"></div>
<div class="ab" style="left:0;top:78.33px;width:531.3px;height:1px;background:#e3e3e3"></div>
<div class="ab" style="left:0;top:95.14px;width:531.3px;height:1px;background:#e3e3e3"></div>
<div class="ab" style="left:0;top:111.95px;width:531.3px;height:1px;background:#e3e3e3"></div>
<div class="ab" style="left:0;top:128.76px;width:531.3px;height:1px;background:#e3e3e3"></div>
<div class="ab" style="left:0;top:145.57px;width:531.3px;height:1px;background:#e3e3e3"></div>
<div class="ab" style="left:0;top:162.38px;width:531.3px;height:1px;background:#e3e3e3"></div>
<div class="ab" style="left:0;top:179.19px;width:531.3px;height:1px;background:#e3e3e3"></div>
<div class="ab" style="left:0;top:196px;width:531.3px;height:1px;background:#e3e3e3"></div>
<div class="ab" style="left:0;top:212.81px;width:531.3px;height:1px;background:#e3e3e3"></div>
<div class="ab" style="left:0;top:229.62px;width:531.3px;height:1px;background:#e3e3e3"></div>
<div class="ab" style="left:0;top:246.43px;width:531.3px;height:1px;background:#e3e3e3"></div>
<div class="ab" style="left:0;top:263.24px;width:531.3px;height:1px;background:#e3e3e3"></div>
<div class="ab" style="left:0;top:280.05px;width:531.3px;height:1px;background:#e3e3e3"></div>
<div class="ab" style="left:0;top:296.86px;width:531.3px;height:1px;background:#e3e3e3"></div>
<div class="ab" style="left:0;top:313.67px;width:531.3px;height:1px;background:#e3e3e3"></div>
<div class="ab" style="left:0;top:330.48px;width:531.3px;height:1px;background:#e3e3e3"></div>
<div class="ab" style="left:0;top:347.29px;width:531.3px;height:1px;background:#e3e3e3"></div>
<div class="ab" style="left:18.73px;top:14.4px;width:1px;height:319.8px;background:#e3e3e3"></div>
<div class="t" style="left:0.0px;width:19.23px;text-align:center;top:17.7px;font-size:10.4px;letter-spacing:-0.4px;color:#2a2a2a"><i>一</i></div>
<div class="ab" style="left:37.95px;top:14.4px;width:1px;height:319.8px;background:#e3e3e3"></div>
<div class="t" style="left:19.23px;width:19.23px;text-align:center;top:17.7px;font-size:10.4px;letter-spacing:-0.4px;color:#2a2a2a"><i>二</i></div>
<div class="ab" style="left:57.18px;top:14.4px;width:1px;height:319.8px;background:#e3e3e3"></div>
<div class="t" style="left:38.45px;width:19.23px;text-align:center;top:17.7px;font-size:10.4px;letter-spacing:-0.4px;color:#2a2a2a"><i>三</i></div>
<div class="ab" style="left:76.4px;top:14.4px;width:1px;height:319.8px;background:#e3e3e3"></div>
<div class="t" style="left:57.68px;width:19.23px;text-align:center;top:17.7px;font-size:10.4px;letter-spacing:-0.4px;color:#2a2a2a"><i>四</i></div>
<div class="ab" style="left:95.63px;top:14.4px;width:1px;height:319.8px;background:#e3e3e3"></div>
<div class="t" style="left:76.9px;width:19.23px;text-align:center;top:17.7px;font-size:10.4px;letter-spacing:-0.4px;color:#2a2a2a"><i>五</i></div>
<div class="ab" style="left:114.86px;top:14.4px;width:1px;height:319.8px;background:#e3e3e3"></div>
<div class="t" style="left:96.13px;width:19.23px;text-align:center;top:17.7px;font-size:10.4px;letter-spacing:-0.4px;color:#2a2a2a"><i>六</i></div>
<div class="ab" style="left:134.08px;top:14.4px;width:1px;height:319.8px;background:#e3e3e3"></div>
<div class="t" style="left:115.36px;width:19.23px;text-align:center;top:17.7px;font-size:10.4px;letter-spacing:-0.4px;color:#2a2a2a"><i>日</i></div>
<div class="ab" style="left:153.31px;top:14.4px;width:1px;height:319.8px;background:#e3e3e3"></div>
<div class="t" style="left:134.58px;width:19.23px;text-align:center;top:17.7px;font-size:10.4px;letter-spacing:-0.4px;color:#2a2a2a"><i>一</i></div>
<div class="ab" style="left:172.53px;top:14.4px;width:1px;height:319.8px;background:#e3e3e3"></div>
<div class="t" style="left:153.81px;width:19.23px;text-align:center;top:17.7px;font-size:10.4px;letter-spacing:-0.4px;color:#2a2a2a"><i>二</i></div>
<div class="ab" style="left:191.76px;top:14.4px;width:1px;height:319.8px;background:#e3e3e3"></div>
<div class="t" style="left:173.03px;width:19.23px;text-align:center;top:17.7px;font-size:10.4px;letter-spacing:-0.4px;color:#2a2a2a"><i>三</i></div>
<div class="ab" style="left:210.99px;top:14.4px;width:1px;height:319.8px;background:#e3e3e3"></div>
<div class="t" style="left:192.26px;width:19.23px;text-align:center;top:17.7px;font-size:10.4px;letter-spacing:-0.4px;color:#2a2a2a"><i>四</i></div>
<div class="ab" style="left:230.21px;top:14.4px;width:1px;height:319.8px;background:#e3e3e3"></div>
<div class="t" style="left:211.49px;width:19.23px;text-align:center;top:17.7px;font-size:10.4px;letter-spacing:-0.4px;color:#2a2a2a"><i>五</i></div>
<div class="ab" style="left:249.44px;top:14.4px;width:1px;height:319.8px;background:#e3e3e3"></div>
<div class="t" style="left:230.71px;width:19.23px;text-align:center;top:17.7px;font-size:10.4px;letter-spacing:-0.4px;color:#2a2a2a"><i>六</i></div>
<div class="ab" style="left:268.66px;top:14.4px;width:1px;height:319.8px;background:#e3e3e3"></div>
<div class="t" style="left:249.94px;width:19.23px;text-align:center;top:17.7px;font-size:10.4px;letter-spacing:-0.4px;color:#2a2a2a"><i>日</i></div>
<div class="ab" style="left:287.89px;top:14.4px;width:1px;height:319.8px;background:#e3e3e3"></div>
<div class="t" style="left:269.16px;width:19.23px;text-align:center;top:17.7px;font-size:10.4px;letter-spacing:-0.4px;color:#2a2a2a"><i>一</i></div>
<div class="ab" style="left:307.12px;top:14.4px;width:1px;height:319.8px;background:#e3e3e3"></div>
<div class="t" style="left:288.39px;width:19.23px;text-align:center;top:17.7px;font-size:10.4px;letter-spacing:-0.4px;color:#2a2a2a"><i>二</i></div>
<div class="ab" style="left:326.34px;top:14.4px;width:1px;height:319.8px;background:#e3e3e3"></div>
<div class="t" style="left:307.62px;width:19.23px;text-align:center;top:17.7px;font-size:10.4px;letter-spacing:-0.4px;color:#2a2a2a"><i>三</i></div>
<div class="ab" style="left:345.57px;top:14.4px;width:1px;height:319.8px;background:#e3e3e3"></div>
<div class="t" style="left:326.84px;width:19.23px;text-align:center;top:17.7px;font-size:10.4px;letter-spacing:-0.4px;color:#2a2a2a"><i>四</i></div>
<div class="ab" style="left:364.79px;top:14.4px;width:1px;height:319.8px;background:#e3e3e3"></div>
<div class="t" style="left:346.07px;width:19.23px;text-align:center;top:17.7px;font-size:10.4px;letter-spacing:-0.4px;color:#2a2a2a"><i>五</i></div>
<div class="ab" style="left:384.02px;top:14.4px;width:1px;height:319.8px;background:#e3e3e3"></div>
<div class="t" style="left:365.29px;width:19.23px;text-align:center;top:17.7px;font-size:10.4px;letter-spacing:-0.4px;color:#2a2a2a"><i>六</i></div>
<div class="ab" style="left:403.25px;top:14.4px;width:1px;height:319.8px;background:#e3e3e3"></div>
<div class="t" style="left:384.52px;width:19.23px;text-align:center;top:17.7px;font-size:10.4px;letter-spacing:-0.4px;color:#2a2a2a"><i>日</i></div>
<div class="ab" style="left:422.47px;top:14.4px;width:1px;height:319.8px;background:#e3e3e3"></div>
<div class="t" style="left:403.75px;width:19.23px;text-align:center;top:17.7px;font-size:10.4px;letter-spacing:-0.4px;color:#2a2a2a"><i>一</i></div>
<div class="ab" style="left:441.7px;top:14.4px;width:1px;height:319.8px;background:#e3e3e3"></div>
<div class="t" style="left:422.97px;width:19.23px;text-align:center;top:17.7px;font-size:10.4px;letter-spacing:-0.4px;color:#2a2a2a"><i>二</i></div>
<div class="ab" style="left:460.92px;top:14.4px;width:1px;height:319.8px;background:#e3e3e3"></div>
<div class="t" style="left:442.2px;width:19.23px;text-align:center;top:17.7px;font-size:10.4px;letter-spacing:-0.4px;color:#2a2a2a"><i>三</i></div>
<div class="ab" style="left:480.15px;top:14.4px;width:1px;height:319.8px;background:#e3e3e3"></div>
<div class="t" style="left:461.42px;width:19.23px;text-align:center;top:17.7px;font-size:10.4px;letter-spacing:-0.4px;color:#2a2a2a"><i>四</i></div>
<div class="ab" style="left:499.38px;top:14.4px;width:1px;height:319.8px;background:#e3e3e3"></div>
<div class="t" style="left:480.65px;width:19.23px;text-align:center;top:17.7px;font-size:10.4px;letter-spacing:-0.4px;color:#2a2a2a"><i>五</i></div>
<div class="ab" style="left:518.6px;top:14.4px;width:1px;height:319.8px;background:#e3e3e3"></div>
<div class="t" style="left:499.88px;width:19.23px;text-align:center;top:17.7px;font-size:10.4px;letter-spacing:-0.4px;color:#2a2a2a"><i>六</i></div>
<div class="ab" style="left:537.83px;top:14.4px;width:1px;height:319.8px;background:#e3e3e3"></div>
<div class="t" style="left:519.1px;width:19.23px;text-align:center;top:17.7px;font-size:10.4px;letter-spacing:-0.4px;color:#2a2a2a"><i>日</i></div>
<div class="t" style="left:3.6px;top:3.2px;font-size:10.4px;letter-spacing:-0.4px;color:#2a2a2a">2017-10-09</div>
<div class="ab" style="left:114.86px;top:0;width:1px;height:14.4px;background:#e0e0e0"></div>
<div class="t" style="left:118.96px;top:3.2px;font-size:10.4px;letter-spacing:-0.4px;color:#2a2a2a">2017-10-15</div>
<div class="ab" style="left:249.44px;top:0;width:1px;height:14.4px;background:#e0e0e0"></div>
<div class="t" style="left:253.54px;top:3.2px;font-size:10.4px;letter-spacing:-0.4px;color:#2a2a2a">2017-10-22</div>
<div class="ab" style="left:384.02px;top:0;width:1px;height:14.4px;background:#e0e0e0"></div>
<div class="t" style="left:388.12px;top:3.2px;font-size:10.4px;letter-spacing:-0.4px;color:#2a2a2a">2017-10-29</div>
<div class="ab" style="left:518.6px;top:0;width:1px;height:14.4px;background:#e0e0e0"></div>
<div class="t" style="left:522.7px;top:3.2px;font-size:10.4px;letter-spacing:-0.4px;color:#2a2a2a">2017-11-05</div>
<svg class="ab" style="left:0;top:0" width="531.3" height="334.2" viewBox="546.4 157.8 531.3 334.2" ><defs><pattern id="hp" width="2" height="2" patternUnits="userSpaceOnUse" patternTransform="rotate(45)"><rect width="2" height="2" fill="#ffffff"/><rect width="1" height="2" fill="#3f5cff"/></pattern></defs><path d="M566.2 189.1 H738.2 V197.6 L733.7 193.6 H570.7 L566.2 197.6 Z" fill="#535e9c"/><rect x="682.2" y="197.4" width="17.4" height="4.2" fill="url(#hp)" stroke="#1a1f55" stroke-width="1"/><rect x="566.2" y="205.7" width="38" height="5" fill="#0000ff"/><rect x="682.2" y="214.3" width="17.4" height="4.2" fill="url(#hp)" stroke="#1a1f55" stroke-width="1"/><path d="M604.2 208.2 L605.2 208.2 L605.2 218.5" fill="none" stroke="#4a5cf5" stroke-width="1"/><path d="M601.6 218.3 H608.8 L605.2 221.9 Z" fill="#0000ff"/><rect x="605.6" y="222.8" width="17.1" height="4.2" fill="url(#hp)" stroke="#1e3cff" stroke-width="1"/><rect x="682.2" y="230.6" width="17.4" height="4.5" fill="url(#hp)" stroke="#1a1f55" stroke-width="1"/><path d="M623.2 225.8 L710.4 225.8 L710.4 234" fill="none" stroke="#4a5cf5" stroke-width="1"/><path d="M706.8 233.8 H714.0 L710.4 237.4 Z" fill="#0000ff"/><path d="M714 241.6 L718.2 245.8 L714 250.0 L709.8 245.8 Z" fill="#4a4a4a" stroke="#222" stroke-width="0.6"/><path d="M718 245.5 L720.2 245.5 L720.2 252.5" fill="none" stroke="#4a5cf5" stroke-width="1"/><path d="M716.6 252 H723.8 L720.2 255.6 Z" fill="#0000ff"/><rect x="720.5" y="257.1" width="17.6" height="3.8" fill="url(#hp)" stroke="#1e3cff" stroke-width="1"/><path d="M738.6 259 L739.3 259 L739.3 286" fill="none" stroke="#4a5cf5" stroke-width="1"/><path d="M735.7 285.7 H742.9 L739.3 289.3 Z" fill="#0000ff"/><path d="M739.3 273.4 H1090 V282 L1085.5 278 H743.8 L739.3 282 Z" fill="#535e9c"/><rect x="739.6" y="290.2" width="17.8" height="3.8" fill="url(#hp)" stroke="#1e3cff" stroke-width="1"/><path d="M757.9 292 L758.5 292 L758.5 303" fill="none" stroke="#4a5cf5" stroke-width="1"/><path d="M754.9 302.7 H762.1 L758.5 306.3 Z" fill="#0000ff"/><rect x="758.8" y="307.1" width="17.4" height="3.8" fill="url(#hp)" stroke="#1e3cff" stroke-width="1"/><path d="M776.7 310 L816.4 310 L816.4 319.5" fill="none" stroke="#4a5cf5" stroke-width="1"/><path d="M812.8 319.2 H820.0 L816.4 322.8 Z" fill="#0000ff"/><rect x="816.7" y="323.5" width="36.6" height="4.7" fill="url(#hp)" stroke="#1e3cff" stroke-width="1"/><rect x="989.4" y="340.5" width="17.1" height="4.6" fill="url(#hp)" stroke="#1e3cff" stroke-width="1"/><path d="M1007 343.2 L1036.6 343.2 L1036.6 369.5" fill="none" stroke="#4a5cf5" stroke-width="1"/><path d="M1033.0 369 H1040.2 L1036.6 372.6 Z" fill="#0000ff"/><rect x="1008.6" y="357.5" width="80.9" height="4.3" fill="url(#hp)" stroke="#1e3cff" stroke-width="1"/><path d="M1044.5 380.5 L1075 380.5" fill="none" stroke="#4a5cf5" stroke-width="1"/><path d="M1040.4 376.2 L1044.7 380.5 L1040.4 384.8 L1036.1 380.5 Z" fill="#4a4a4a" stroke="#222" stroke-width="0.6"/></svg>
<div class="t" style="left:196.20px;top:32.70px;font-size:10.4px;letter-spacing:-0.4px;color:#2a2a2a"><i>订</i><i>单</i><i>获</i><i>取</i>(P0)</div>
<div class="t" style="left:61.30px;top:49.60px;font-size:10.4px;letter-spacing:-0.4px;color:#2a2a2a"><i>获</i><i>取</i><i>客</i><i>户</i><i>需</i><i>求</i></div>
<div class="t" style="left:81.10px;top:66.40px;font-size:10.4px;letter-spacing:-0.4px;color:#2a2a2a"><i>客</i><i>户</i><i>需</i><i>求</i><i>评</i><i>审</i></div>
<div class="t" style="left:185.10px;top:82.30px;font-size:10.4px;letter-spacing:-0.4px;color:#2a2a2a">TR1<i>概</i><i>要</i><i>设</i><i>计</i><i>及</i><i>评</i><i>审</i></div>
<div class="t" style="left:196.10px;top:100.40px;font-size:10.4px;letter-spacing:-0.4px;color:#2a2a2a"><i>订</i><i>单</i><i>获</i><i>取</i></div>
<div class="t" style="left:215.40px;top:133.50px;font-size:10.4px;letter-spacing:-0.4px;color:#2a2a2a"><i>项</i><i>目</i><i>任</i><i>务</i><i>下</i><i>达</i></div>
<div class="t" style="left:234.80px;top:150.40px;font-size:10.4px;letter-spacing:-0.4px;color:#2a2a2a"><i>成</i><i>立</i><i>项</i><i>目</i><i>组</i></div>
<div class="t" style="left:311.90px;top:167.50px;font-size:10.4px;letter-spacing:-0.4px;color:#2a2a2a"><i>人</i><i>力</i><i>协</i><i>调</i></div>
<div class="t" style="left:464.80px;top:184.40px;font-size:10.4px;letter-spacing:-0.4px;color:#2a2a2a"><i>项</i><i>目</i><i>文</i><i>档</i><i>控</i><i>制</i></div>
<div class="t" style="left:511.80px;top:218.50px;font-size:10.4px;letter-spacing:-0.4px;color:#2a2a2a">TR2<i>确</i><i>定</i><i>项</i><i>目</i><i>需</i><i>求</i></div>
</div>
<div class="ab" style="left:1070.6px;top:186.2px;width:7.4px;height:305.8px;background:#f0f0f0"></div>
<svg class="ab" style="left:1070px;top:190px" width="9" height="9"><path d="M3.8 6 L7.7 6 L7.7 2.8 Z" fill="#a0a0a0"/></svg>
<div class="ab" style="left:1072px;top:200.5px;width:5.6px;height:230px;background:#c1c1c1"></div>
<div class="ab" style="left:1077.6px;top:0;width:2.4px;height:492px;background:#f2f2f2"></div>
<div class="ab" style="left:1078.3px;top:13px;width:1.7px;height:457.5px;background:#c6c6c6"></div>
</body></html>
